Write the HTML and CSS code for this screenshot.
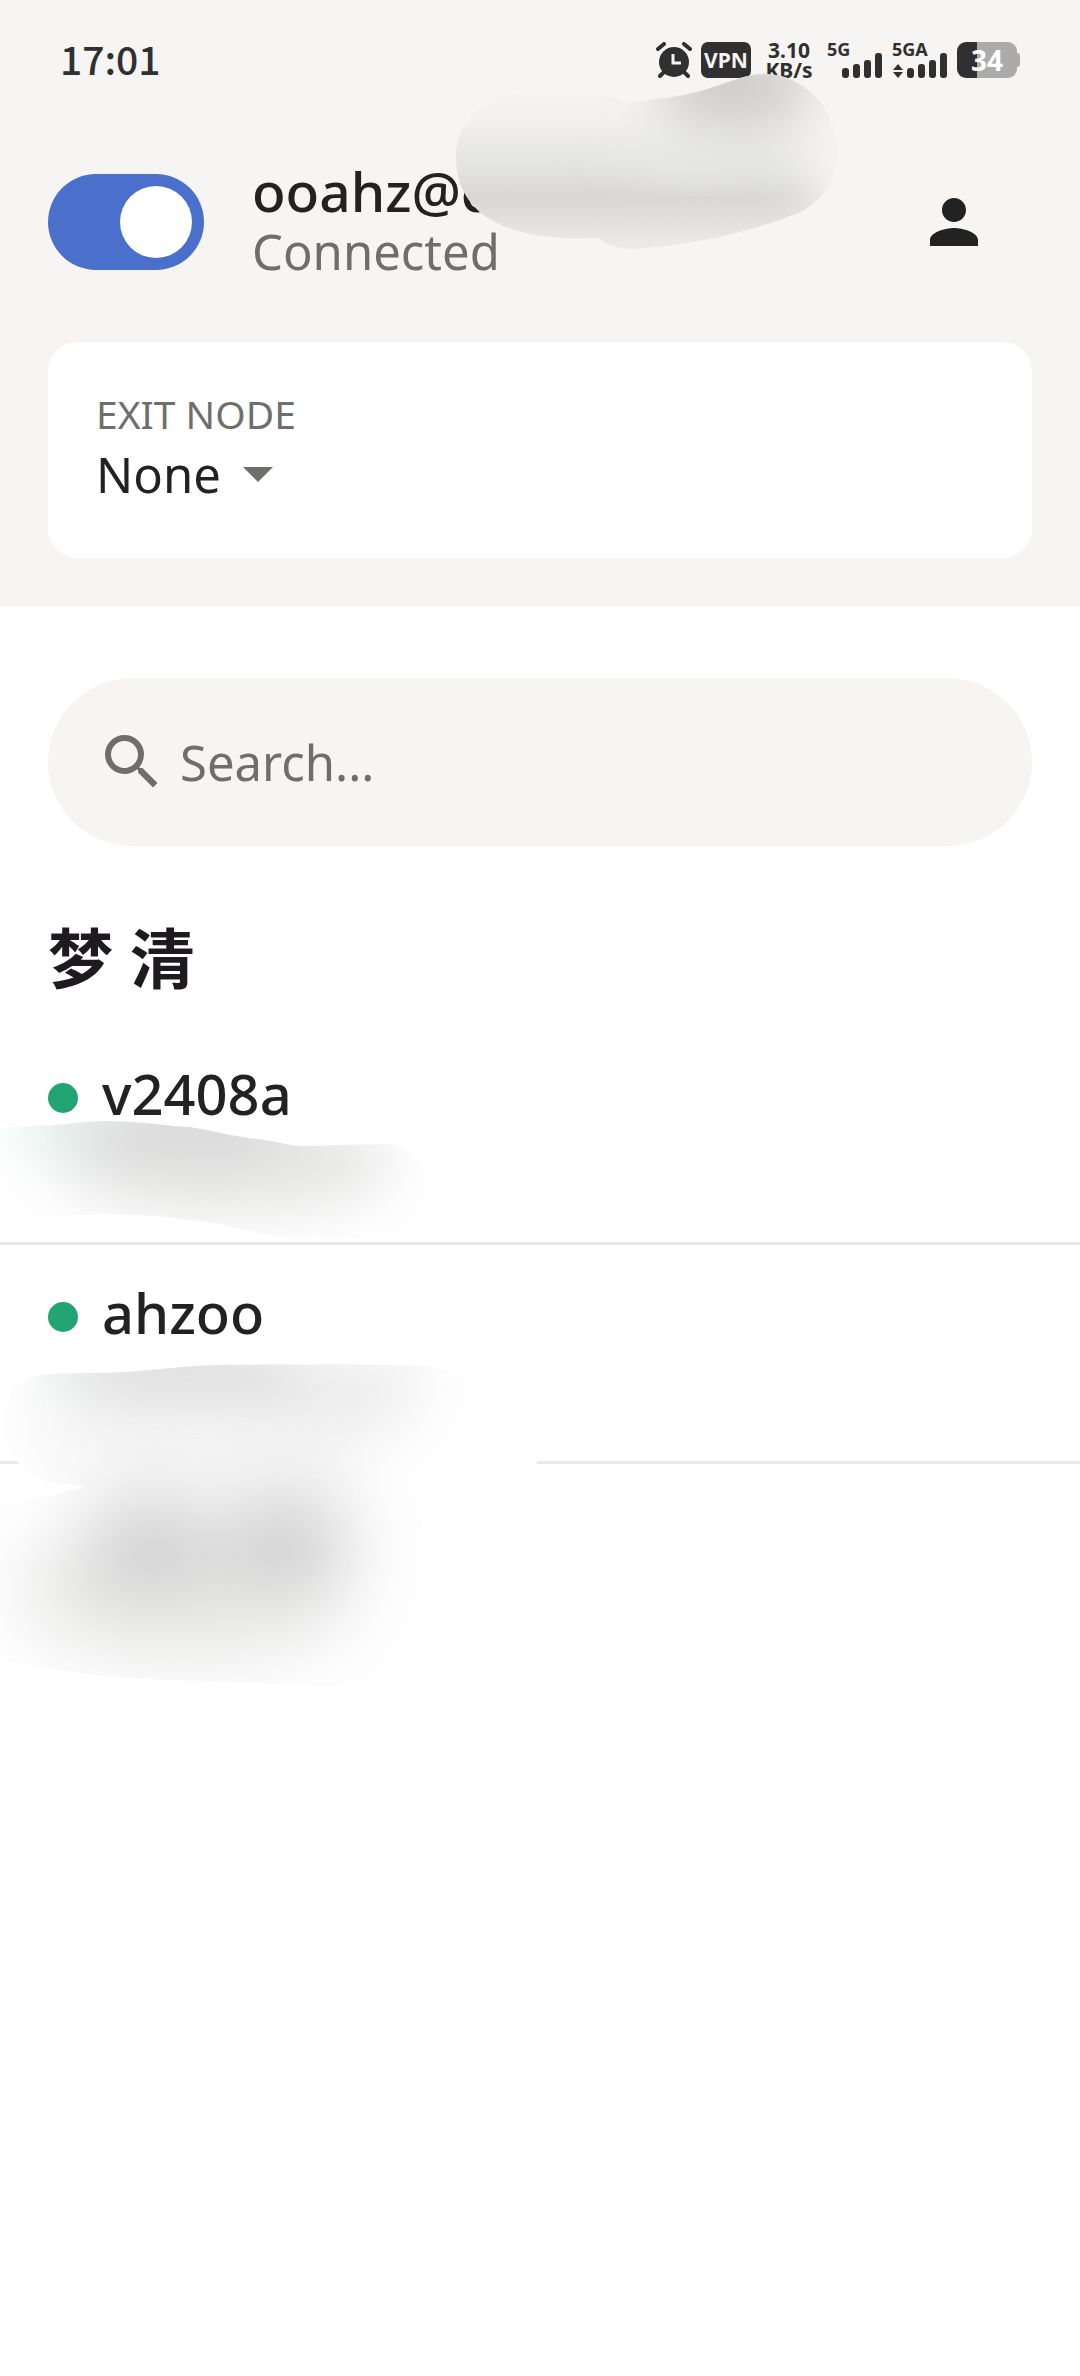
FILE: index.html
```
<!DOCTYPE html>
<html lang="en">
<head>
    <meta charset="UTF-8">
    <meta name="viewport" content="width=device-width, initial-scale=1.0">
    <title>Machines</title>
    <link rel="stylesheet" href="styles.css">
</head>
<body>
    <header class="header">
        <div class="status-bar">
            <time class="clock">17:01</time>
            <div class="status-icons">
                <svg class="alarm" width="36" height="36" viewBox="0 0 36 36" aria-hidden="true">
                    <circle cx="18" cy="20" r="15" fill="#303030"/>
                    <path d="M2 7L8 2M34 7L28 2M4 34L8 30M32 34L28 30" stroke="#303030" stroke-width="4" stroke-linecap="round"/>
                    <path d="M17 12v9h8" fill="none" stroke="#f6f5f3" stroke-width="3"/>
                </svg>
                <span class="vpn">VPN</span>
                <span class="speed"><span>3.10</span><span>KB/s</span></span>
                <div class="signal">
                    <span class="network">5G</span>
                    <svg width="56" height="36" viewBox="0 0 56 36" fill="#303030" aria-hidden="true">
                        <rect x="15" y="26" width="7" height="10" rx="3"/>
                        <rect x="26" y="22" width="7" height="14" rx="3"/>
                        <rect x="37" y="18" width="7" height="18" rx="3"/>
                        <rect x="48" y="11" width="7" height="25" rx="3"/>
                    </svg>
                </div>
                <div class="signal">
                    <span class="network">5GA</span>
                    <svg width="56" height="36" viewBox="0 0 56 36" fill="#303030" aria-hidden="true">
                        <path d="M1 28l5-6 5 6zM1 30h10l-5 6z"/>
                        <rect x="15" y="26" width="7" height="10" rx="3"/>
                        <rect x="26" y="22" width="7" height="14" rx="3"/>
                        <rect x="37" y="18" width="7" height="18" rx="3"/>
                        <rect x="48" y="11" width="7" height="25" rx="3"/>
                    </svg>
                </div>
                <div class="battery"><span class="battery-level">34</span></div>
            </div>
        </div>
        <div class="profile">
            <input type="checkbox" class="switch" id="vpn-switch" role="switch" aria-labelledby="account" checked>
            <div class="profile-text">
                <label for="vpn-switch" class="account" id="account">ooahz@c</label>
                <div class="state">Connected</div>
            </div>
            <button type="button" class="avatar" aria-label="Account">
                <svg width="72" height="72" viewBox="0 0 24 24" aria-hidden="true">
                    <path fill="#222" d="M12 12c2.21 0 4-1.79 4-4s-1.79-4-4-4-4 1.79-4 4 1.79 4 4 4zm0 2c-2.67 0-8 1.34-8 4v2h16v-2c0-2.66-5.33-4-8-4z"/>
                </svg>
            </button>
        </div>
        <div class="card">
            <label for="exit-node" class="card-label">EXIT NODE</label>
            <div class="select-row">
                <select id="exit-node" class="exit-node">
                    <option>None</option>
                </select>
                <svg width="30" height="15" viewBox="0 0 30 15" aria-hidden="true"><path fill="#706e6d" d="M0 0h30L15 15z"/></svg>
            </div>
        </div>
        <svg class="smudge smudge-account" width="400" height="190" viewBox="450 65 400 190" aria-hidden="true">
            <defs>
                <clipPath id="clip-account">
                    <path d="M456 157C456 116 490 91 550 91C585 91 610 94 626 103C650 100 675 97 693 93C725 85 742 74 765 74C804 74 837 110 837 149C837 182 819 207 790 216C735 237 685 245 635 249C617 249 607 245 597 238C540 241 456 232 456 157Z"/>
                </clipPath>
                <linearGradient id="fade-account" x1="0" y1="0" x2="0" y2="1">
                    <stop offset="0" stop-color="#f6f5f3"/>
                    <stop offset=".28" stop-color="#f2f1ef"/>
                    <stop offset=".5" stop-color="#e4e4e2"/>
                    <stop offset=".69" stop-color="#d8d7d6"/>
                    <stop offset="1" stop-color="#efeeed"/>
                </linearGradient>
                <filter id="soft" x="-100%" y="-150%" width="300%" height="400%" color-interpolation-filters="sRGB"><feGaussianBlur stdDeviation="26"/></filter>
            </defs>
            <g clip-path="url(#clip-account)">
                <rect x="450" y="70" width="400" height="185" fill="url(#fade-account)"/>
                <g filter="url(#soft)">
                    <ellipse cx="735" cy="86" rx="78" ry="42" fill="#cecdcc"/>
                    <ellipse cx="860" cy="160" rx="54" ry="90" fill="#f6f5f3"/>
                    <ellipse cx="700" cy="152" rx="90" ry="16" fill="#ebebe9"/>
                </g>
            </g>
        </svg>
    </header>
    <main class="main">
        <div class="search">
            <svg width="72" height="72" viewBox="0 0 24 24" aria-hidden="true">
                <path fill="#706e6d" d="M15.5 14h-.79l-.28-.27A6.47 6.47 0 0 0 16 9.5 6.5 6.5 0 1 0 9.5 16c1.61 0 3.09-.59 4.23-1.57l.27.28v.79l5 4.99L20.49 19l-4.99-5zm-6 0C7.01 14 5 11.99 5 9.5S7.01 5 9.5 5 14 7.01 14 9.5 11.99 14 9.5 14z"/>
            </svg>
            <input type="text" class="search-input" placeholder="Search..." aria-label="Search">
        </div>
        <h1 class="owner" lang="zh">梦 清</h1>
        <ul class="machines">
            <li class="machine">
                <div class="machine-row">
                    <span class="dot"></span>
                    <span class="machine-name">v2408a</span>
                </div>
                <svg class="smudge smudge-first" width="440" height="130" viewBox="0 1115 440 130" aria-hidden="true">
                    <defs>
                        <clipPath id="clip-first">
                            <path d="M0 1130Q8 1126 30 1126C60 1126 80 1121 110 1121C150 1122 165 1126 190 1127C220 1132 235 1137 258 1139C280 1142 290 1146 305 1146C350 1145 365 1144 390 1144C415 1148 428 1170 428 1192C425 1215 410 1235 390 1237C350 1238 320 1238 300 1238C255 1237 230 1223 190 1220C160 1216 130 1214 110 1214C80 1214 50 1219 25 1219Q6 1219 0 1215Z"/>
                        </clipPath>
                    </defs>
                    <g clip-path="url(#clip-first)">
                        <rect x="0" y="1115" width="440" height="130" fill="#fefefe"/>
                        <g filter="url(#soft)">
                            <ellipse cx="225" cy="1162" rx="165" ry="52" fill="#e6e6e5"/>
                            <ellipse cx="60" cy="1124" rx="34" ry="34" fill="#dfeee8"/>
                            <ellipse cx="190" cy="1126" rx="105" ry="38" fill="#dadada"/>
                        </g>
                    </g>
                </svg>
            </li>
            <li class="machine">
                <div class="machine-row">
                    <span class="dot"></span>
                    <span class="machine-name">ahzoo</span>
                </div>
            </li>
            <li class="machine machine-hidden">
                <svg class="smudge smudge-second" width="545" height="345" viewBox="0 1355 545 345" aria-hidden="true">
                    <defs>
                        <clipPath id="clip-second">
                            <path d="M45 1374C80 1373 100 1373 125 1372C165 1369 185 1366 215 1365C290 1364 350 1364 410 1365C480 1367 540 1410 540 1440C540 1478 520 1497 480 1497L425 1500L417 1545V1690C350 1688 250 1682 190 1681C100 1677 60 1672 0 1660V1499H25C50 1497 68 1491 85 1487L45 1481C20 1474 4 1448 4 1425C4 1394 18 1375 45 1374Z"/>
                        </clipPath>
                        <filter id="softer" x="-100%" y="-150%" width="300%" height="400%" color-interpolation-filters="sRGB"><feGaussianBlur stdDeviation="34"/></filter>
                    </defs>
                    <g clip-path="url(#clip-second)">
                        <rect x="0" y="1355" width="545" height="345" fill="#fefefe"/>
                        <g filter="url(#soft)">
                            <ellipse cx="210" cy="1430" rx="180" ry="60" fill="#f5f5f5"/>
                            <ellipse cx="325" cy="1388" rx="100" ry="32" fill="#ebebeb"/>
                            <ellipse cx="70" cy="1370" rx="26" ry="20" fill="#dde9e5"/>
                            <ellipse cx="185" cy="1372" rx="120" ry="30" fill="#dcdcdc"/>
                        </g>
                        <g filter="url(#softer)">
                            <ellipse cx="185" cy="1590" rx="165" ry="70" fill="#e8e8e7"/>
                            <ellipse cx="150" cy="1545" rx="66" ry="52" fill="#d3d3d3"/>
                            <ellipse cx="285" cy="1540" rx="66" ry="52" fill="#d3d3d3"/>
                        </g>
                    </g>
                </svg>
            </li>
        </ul>
    </main>
</body>
</html>
```
FILE: styles.css
```
* {
    box-sizing: border-box;
}
body {
    font-family: "Noto Sans", "Noto Sans CJK SC", sans-serif;
    background: #ffffff;
    color: #222;
    margin: 0;
    min-height: 100vh;
}
.header {
    position: relative;
    background: #f6f5f3;
    padding: 0 48px 48px;
}
.status-bar {
    display: flex;
    justify-content: space-between;
    align-items: center;
    height: 120px;
    padding: 0 12px;
    color: #303030;
}
.clock {
    padding-bottom: 4px;
    font-family: "Noto Sans CJK SC", sans-serif;
    font-size: 39px;
    font-weight: 500;
    line-height: 48px;
}
.status-icons {
    display: flex;
    align-items: center;
    gap: 9px;
    font-weight: 700;
}
.vpn {
    width: 50px;
    height: 36px;
    border-radius: 7px;
    background: #303030;
    color: #f6f5f3;
    font-size: 21px;
    line-height: 36px;
    text-align: center;
}
.speed {
    display: flex;
    flex-direction: column;
    width: 58px;
    text-align: center;
    font-size: 21px;
    line-height: 20px;
}
.signal {
    position: relative;
    height: 36px;
}
.signal svg {
    display: block;
}
.network {
    position: absolute;
    top: -2px;
    left: 0;
    font-size: 18px;
    line-height: 18px;
}
.battery {
    position: relative;
    width: 60px;
    height: 36px;
    margin-right: 3px;
    border-radius: 9px;
    background: linear-gradient(to right, #303030 34%, #acaba9 34%);
    text-align: center;
}
.battery::after {
    content: "";
    position: absolute;
    top: 11px;
    right: -3px;
    width: 3px;
    height: 14px;
    border-radius: 0 3px 3px 0;
    background: #acaba9;
}
.battery-level {
    color: #ffffff;
    font-size: 28px;
    line-height: 36px;
}
.profile {
    display: flex;
    align-items: center;
    padding: 42px 42px 60px 0;
}
.switch {
    appearance: none;
    display: flex;
    justify-content: flex-end;
    width: 156px;
    height: 96px;
    margin: 0 48px 0 0;
    padding: 12px;
    border-radius: 48px;
    background: #4b70cc;
}
.switch::before {
    content: "";
    width: 72px;
    height: 72px;
    border-radius: 50%;
    background: #ffffff;
}
.switch:not(:checked) {
    justify-content: flex-start;
    background: #c4c3c2;
}
.profile-text {
    flex: 1;
}
.account {
    display: block;
    font-size: 55px;
    font-weight: 500;
    line-height: 58px;
}
.state {
    color: #706e6d;
    font-size: 49px;
    line-height: 62px;
}
.avatar {
    padding: 0;
    border: none;
    background: none;
}
.avatar svg {
    display: block;
}
.card {
    padding: 48px;
    border-radius: 30px;
    background: #ffffff;
}
.card-label {
    display: block;
    color: #706e6d;
    font-size: 39px;
    line-height: 48px;
}
.select-row {
    display: flex;
    align-items: center;
    gap: 22px;
}
.exit-node {
    appearance: none;
    height: 72px;
    padding: 0;
    border: none;
    background: none;
    color: #222;
    font-family: inherit;
    font-size: 49px;
    line-height: 72px;
}
.main {
    padding-top: 72px;
}
.search {
    display: flex;
    align-items: center;
    gap: 12px;
    height: 168px;
    margin: 0 48px;
    padding: 0 48px;
    border-radius: 84px;
    background: #f6f5f3;
}
.search-input {
    flex: 1;
    padding: 0;
    border: none;
    outline: none;
    background: none;
    color: #222;
    font-family: inherit;
    font-size: 49px;
    line-height: 72px;
}
.search-input::placeholder {
    color: #706e6d;
    opacity: 1;
}
.owner {
    margin: 0;
    padding: 70px 48px 26px;
    color: #1d1b20;
    font-size: 65px;
    font-weight: 700;
    line-height: 84px;
}
.machines {
    margin: 0;
    padding: 0;
    list-style: none;
}
.machine {
    position: relative;
    min-height: 219px;
    padding: 24px 48px;
    border-bottom: 3px solid #e9e9e9;
}
.machine-hidden {
    min-height: 240px;
    border-bottom: none;
}
.machine-row {
    display: flex;
    align-items: center;
    gap: 24px;
    height: 96px;
}
.dot {
    width: 30px;
    height: 30px;
    border-radius: 50%;
    background: #23a573;
}
.machine-name {
    padding-bottom: 10px;
    font-size: 56px;
    font-weight: 500;
    line-height: 72px;
}
/* smeared patches that hide the private text */
.smudge {
    position: absolute;
    pointer-events: none;
}
.smudge-account {
    top: 65px;
    left: 450px;
}
.smudge-first {
    top: 89px;
    left: 0;
}
/* starts in the row above and covers both */
.smudge-second {
    top: -109px;
    left: 0;
}
```
